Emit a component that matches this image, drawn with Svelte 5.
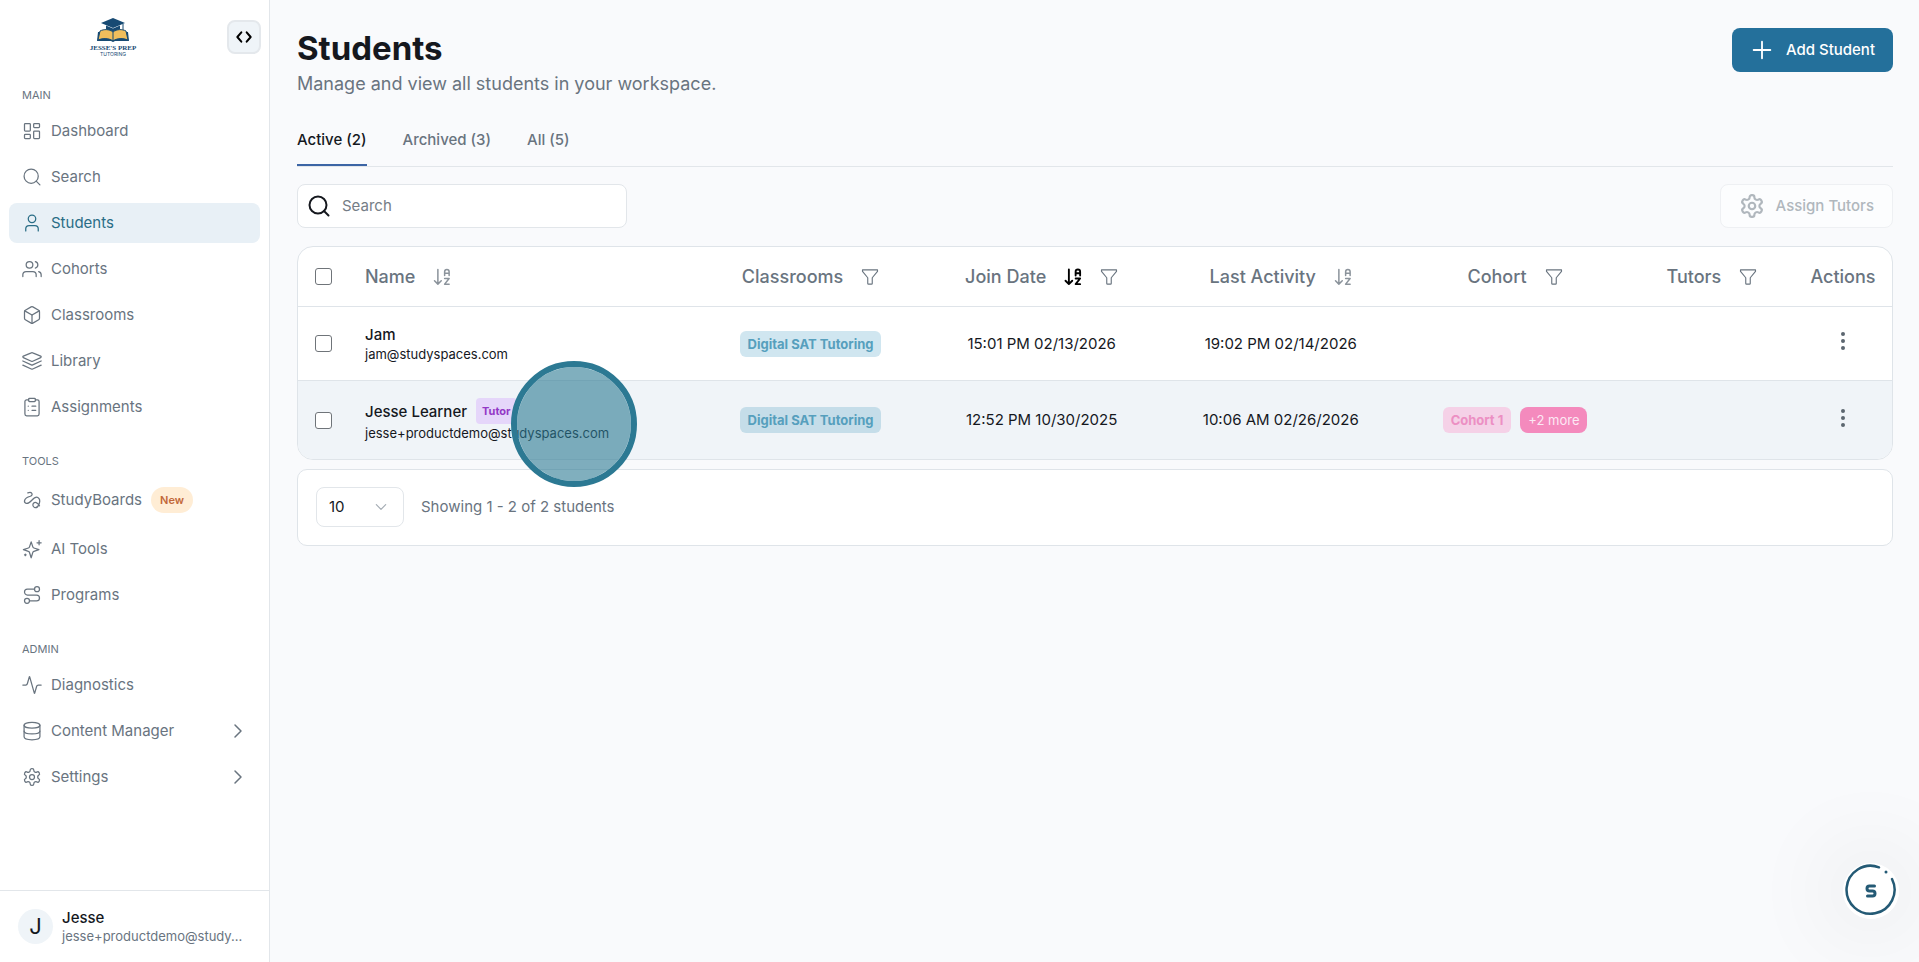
<script>
	const icons = {
		dashboard: '<rect x="3" y="3" width="7" height="9" rx="1"/><rect x="14" y="3" width="7" height="5" rx="1"/><rect x="14" y="12" width="7" height="9" rx="1"/><rect x="3" y="16" width="7" height="5" rx="1"/>',
		search: '<circle cx="11" cy="11" r="8.5"/><path d="m21.5 21.5-4.5-4.5"/>',
		user: '<path d="M19.5 21.5V19a4 4 0 0 0-4-4h-7a4 4 0 0 0-4 4v2.5"/><circle cx="12" cy="7" r="4.5"/>',
		users: '<path d="M17 21v-2a4 4 0 0 0-4-4H5a4 4 0 0 0-4 4v2"/><circle cx="9" cy="7" r="4"/><path d="M23 21v-2a4 4 0 0 0-3-3.87"/><path d="M16 3.13a4 4 0 0 1 0 7.75"/>',
		box: '<path d="M21 8a2 2 0 0 0-1-1.730l-7-4a2 2 0 0 0-2 0l-7 4A2 2 0 0 0 3 8v8a2 2 0 0 0 1 1.730l7 4a2 2 0 0 0 2 0l7-4A2 2 0 0 0 21 16Z"/><path d="m3.3 7 8.7 5 8.7-5"/><path d="M12 22V12"/>',
		layers: '<path d="M12.83 2.18a2 2 0 0 0-1.66 0L1.6 6.08a1 1 0 0 0 0 1.83l9.58 4.36a2 2 0 0 0 1.66 0l9.58-4.35a1 1 0 0 0 0-1.83Z"/><path d="m23 12-10.17 4.65a2 2 0 0 1-1.66 0L1 12"/><path d="m23 17-10.17 4.65a2 2 0 0 1-1.66 0L1 17"/>',
		clipboard: '<rect x="8" y="1.5" width="8" height="4" rx="1"/><path d="M16 3.5h2.5a2 2 0 0 1 2 2v15a2 2 0 0 1-2 2h-13a2 2 0 0 1-2-2v-15a2 2 0 0 1 2-2H8"/><path d="M12 11h4.500M12 16h4.500M7.500 11h.01M7.500 16h.01"/>',
		squiggle: '<path d="M7 3.5c5-2 7 2.5 3 4C1.5 10 2 15 5 16c5 2 9-10 14-7s.5 13.5-4 12c-5-2.5.5-11 6-2"/>',
		sparkles: '<path d="M11 3.5 13 9.500a2 2 0 0 0 1.3 1.3l6 2-6 2a2 2 0 0 0-1.3 1.3L11 22.500 9 16.200a2 2 0 0 0-1.3-1.3l-6-2.1 6-2A2 2 0 0 0 9 9.500Z"/><path d="M20.500 2v5M18 4.500h5M4 18v2M3 19h2"/>',
		route: '<circle cx="6" cy="19" r="3"/><path d="M9 19h8.5a3.5 3.5 0 0 0 0-7h-11a3.5 3.5 0 0 1 0-7H15"/><circle cx="18" cy="5" r="3"/>',
		activity: '<path d="M23 12h-3.500a2 2 0 0 0-1.9 1.46l-2.35 8.36a.25.25 0 0 1-.48 0L9.24 2.18a.25.25 0 0 0-.48 0l-2.35 8.36A2 2 0 0 1 4.49 12H1"/>',
		database: '<ellipse cx="12" cy="5" rx="9.5" ry="3.5"/><path d="M2.5 5v14c0 2 4.2 3.5 9.5 3.5s9.5-1.5 9.5-3.5V5"/><path d="M2.5 12c0 2 4.2 3.5 9.5 3.5s9.5-1.5 9.5-3.5"/>',
		gear: '<path d="M12.22 2h-.44a2 2 0 0 0-2 2v.18a2 2 0 0 1-1 1.73l-.43.25a2 2 0 0 1-2 0l-.15-.08a2 2 0 0 0-2.73.73l-.22.38a2 2 0 0 0 .73 2.73l.15.1a2 2 0 0 1 1 1.72v.51a2 2 0 0 1-1 1.74l-.15.09a2 2 0 0 0-.73 2.73l.22.38a2 2 0 0 0 2.73.73l.15-.08a2 2 0 0 1 2 0l.43.25a2 2 0 0 1 1 1.73V20a2 2 0 0 0 2 2h.44a2 2 0 0 0 2-2v-.18a2 2 0 0 1 1-1.73l.43-.25a2 2 0 0 1 2 0l.15.08a2 2 0 0 0 2.73-.73l.22-.39a2 2 0 0 0-.73-2.73l-.15-.08a2 2 0 0 1-1-1.74v-.5a2 2 0 0 1 1-1.74l.15-.09a2 2 0 0 0 .73-2.73l-.22-.38a2 2 0 0 0-2.73-.73l-.15.08a2 2 0 0 1-2 0l-.43-.25a2 2 0 0 1-1-1.73V4a2 2 0 0 0-2-2z"/><circle cx="12" cy="12" r="3"/>',
		sort: '<path d="m2 17 4.5 4.5L11 17M6.500 21V2"/><path d="M15.500 10V5a3 3 0 0 1 6 0v5M15.500 7h6M15.500 14h6l-6 7.500h6"/>',
		funnel: '<path d="M2 2.500h20v2l-7 8.500v7.500a1 1 0 0 1-1 1h-4a1 1 0 0 1-1-1V13L2 4.500z"/>',
		chevron: '<path d="m8 4 8 8-8 8"/>',
		down: '<path d="m4 8 8 8 8-8"/>',
		plus: '<path d="M12 2v20M2 12h20"/>',
		code: '<path d="m8 5-6 7 6 7M16 5l6 7-6 7"/>'
	};

	const sections = [
		{
			label: 'Main',
			items: [
				{ name: 'Dashboard', icon: 'dashboard' },
				{ name: 'Search', icon: 'search' },
				{ name: 'Students', icon: 'user', active: true },
				{ name: 'Cohorts', icon: 'users' },
				{ name: 'Classrooms', icon: 'box' },
				{ name: 'Library', icon: 'layers' },
				{ name: 'Assignments', icon: 'clipboard' }
			]
		},
		{
			label: 'Tools',
			items: [
				{ name: 'StudyBoards', icon: 'squiggle', badge: 'New' },
				{ name: 'AI Tools', icon: 'sparkles' },
				{ name: 'Programs', icon: 'route' }
			]
		},
		{
			label: 'Admin',
			items: [
				{ name: 'Diagnostics', icon: 'activity' },
				{ name: 'Content Manager', icon: 'database', expand: true },
				{ name: 'Settings', icon: 'gear', expand: true }
			]
		}
	];

	const columns = [
		{ name: 'Name', key: 'name', sort: true },
		{ name: 'Classrooms', key: 'classrooms', filter: true },
		{ name: 'Join Date', key: 'joined', sort: true, sorted: true, filter: true },
		{ name: 'Last Activity', key: 'activity', sort: true },
		{ name: 'Cohort', key: 'cohort', filter: true },
		{ name: 'Tutors', key: 'tutors', filter: true },
		{ name: 'Actions', key: 'actions' }
	];

	const students = [
		{
			name: 'Jam',
			email: 'jam@studyspaces.com',
			classroom: 'Digital SAT Tutoring',
			joined: '15:01 PM 02/13/2026',
			activity: '19:02 PM 02/14/2026'
		},
		{
			name: 'Jesse Learner',
			email: 'jesse+productdemo@studyspaces.com',
			tag: 'Tutor',
			classroom: 'Digital SAT Tutoring',
			joined: '12:52 PM 10/30/2025',
			activity: '10:06 AM 02/26/2026',
			cohort: 'Cohort 1',
			more: 2,
			hover: true
		}
	];

	const tabs = ['Active (2)', 'Archived (3)', 'All (5)'];
	let tab = $state('Active (2)');
	let query = $state('');
	let pageSize = $state('10');
</script>

{#snippet icon(name)}
	<svg class="icon" viewBox="0 0 24 24" aria-hidden="true">{@html icons[name]}</svg>
{/snippet}

<div class="app">
	<aside>
		<div class="brand">
			<svg class="logo" viewBox="0 0 48 40" role="img" aria-label="Jesse's Prep Tutoring">
				<path d="M24 1 12 6l12 5 12-5z" fill="#174a73" />
				<path d="M17 8.500v4c4 3 10 3 14 0v-4l-7 3z" fill="#174a73" />
				<path d="M34 7v8" stroke="#174a73" />
				<path d="M10 15h-1l-1 9h14l2 1 2-1h14l-1-9h-1" fill="#174a73" />
				<path d="M24 15c-4-3-9-3-13-1L9 23c5-2 11-2 15 1 4-3 10-3 15-1l-2-9c-4-2-9-2-13 1z" fill="#f1be5c" stroke="#174a73" />
				<path d="M24 15v9" stroke="#174a73" />
				<text class="logo-name" x="24" y="33">JESSE'S PREP</text>
				<text class="logo-sub" x="24" y="39">TUTORING</text>
			</svg>
			<button class="collapse" aria-label="Toggle sidebar">{@render icon('code')}</button>
		</div>
		<nav>
			{#each sections as section}
				<h2>{section.label}</h2>
				<ul>
					{#each section.items as item}
						<li>
							<a href="#{item.icon}" class:active={item.active}>
								{@render icon(item.icon)}
								{item.name}
								{#if item.badge}<span class="new">{item.badge}</span>{/if}
								{#if item.expand}<span class="expand">{@render icon('chevron')}</span>{/if}
							</a>
						</li>
					{/each}
				</ul>
			{/each}
		</nav>
		<div class="account">
			<span class="avatar">J</span>
			<div class="who">
				<strong>Jesse</strong>
				<span>jesse+productdemo@study...</span>
			</div>
		</div>
	</aside>

	<main>
		<header>
			<div>
				<h1>Students</h1>
				<p>Manage and view all students in your workspace.</p>
			</div>
			<button class="primary">{@render icon('plus')} Add Student</button>
		</header>

		<div class="tabs">
			{#each tabs as t}
				<button class:current={tab === t} onclick={() => (tab = t)}>{t}</button>
			{/each}
		</div>

		<div class="toolbar">
			<label class="search">
				{@render icon('search')}
				<input type="text" placeholder="Search" aria-label="Search" bind:value={query} />
			</label>
			<button class="assign" disabled>{@render icon('gear')} Assign Tutors</button>
		</div>

		<div class="table-wrap">
			<table>
				<colgroup>
					<col class="c-check" />
					{#each columns as column}
						<col class="c-{column.key}" />
					{/each}
				</colgroup>
				<thead>
					<tr>
						<th class="check"><input type="checkbox" aria-label="Select all" /></th>
						{#each columns as column}
							<th class:name={column.key === 'name'}>
								<div class="head">
									{column.name}
									{#if column.sort}
										<button class="sort" class:sorted={column.sorted} aria-label="Sort by {column.name}">{@render icon('sort')}</button>
									{/if}
									{#if column.filter}
										<button aria-label="Filter {column.name}">{@render icon('funnel')}</button>
									{/if}
								</div>
							</th>
						{/each}
					</tr>
				</thead>
				<tbody>
					{#each students as student}
						<tr class:hover={student.hover}>
							<td class="check"><input type="checkbox" aria-label="Select {student.name}" /></td>
							<td class="name">
								<div class="student">
									<strong>{student.name}</strong>
									{#if student.tag}<span class="tag purple">{student.tag}</span>{/if}
								</div>
								<div class="email">{student.email}</div>
								{#if student.hover}<span class="pointer"></span>{/if}
							</td>
							<td><span class="tag blue">{student.classroom}</span></td>
							<td>{student.joined}</td>
							<td>{student.activity}</td>
							<td>
								{#if student.cohort}
									<div class="cohorts">
										<span class="tag pink">{student.cohort}</span>
										<span class="tag more">+{student.more} more</span>
									</div>
								{/if}
							</td>
							<td></td>
							<td>
								<button class="menu" aria-label="Actions for {student.name}">
									<svg viewBox="0 0 4 18"><circle cx="2" cy="2" r="2" /><circle cx="2" cy="9" r="2" /><circle cx="2" cy="16" r="2" /></svg>
								</button>
							</td>
						</tr>
					{/each}
				</tbody>
			</table>
		</div>

		<div class="pager">
			<div class="size">
				<select aria-label="Rows per page" bind:value={pageSize}>
					<option>10</option>
					<option>20</option>
					<option>50</option>
				</select>
				{@render icon('down')}
			</div>
			<span>Showing 1 - 2 of 2 students</span>
		</div>
	</main>

	<button class="assistant" aria-label="Open assistant">
		<svg viewBox="0 0 56 56">
			<circle class="disc" cx="28" cy="28" r="28" />
			<path class="ring" d="M36 4.300A24 24 0 1 0 49 16" />
			<circle class="dot" cx="43" cy="9" r="1.500" />
			<path class="mark" d="M31.500 23h-5q-2.500 0-2.500 2.500t2.500 2.500h3q2.500 0 2.500 2.500T29.500 33H24.500" />
		</svg>
	</button>
</div>

<style>
	:global(body) {
		background: #f9fafc;
	}
	.app {
		display: flex;
		min-height: 100vh;
		font-family: Inter, "Liberation Sans", sans-serif;
		font-size: 15px;
		line-height: 20px;
		color: #15181e;
	}
	button, input, select {
		font: inherit;
		color: inherit;
		margin: 0;
	}
	button {
		background: none;
		border: none;
		padding: 0;
		cursor: pointer;
	}
	.icon {
		display: block;
		flex: none;
		width: 20px;
		height: 20px;
		fill: none;
		stroke: currentColor;
		stroke-width: 1.5;
		stroke-linecap: round;
		stroke-linejoin: round;
	}

	aside {
		position: sticky;
		top: 0;
		display: flex;
		flex-direction: column;
		flex: none;
		box-sizing: border-box;
		width: 270px;
		height: 100vh;
		background: #fff;
		border-right: 1px solid #e2e6ea;
	}
	.brand {
		display: flex;
		align-items: center;
		justify-content: flex-end;
		gap: 90px;
		padding: 16px 8px 0 0;
	}
	.logo {
		width: 48px;
		height: 42px;
	}
	.logo-name, .logo-sub {
		font-family: "Liberation Serif", serif;
		font-size: 7px;
		font-weight: 700;
		text-anchor: middle;
		fill: #174a73;
	}
	.logo-sub {
		font-family: Inter, sans-serif;
		font-size: 5px;
		font-weight: 400;
	}
	.collapse {
		display: grid;
		place-items: center;
		box-sizing: border-box;
		width: 34px;
		height: 34px;
		background: #eff4f8;
		border: 2px solid #e4e8ec;
		border-radius: 8px;
		color: #000;
	}
	.collapse .icon {
		width: 16px;
		height: 16px;
		stroke-width: 3;
	}
	nav {
		flex: 1;
		padding: 3px 9px 0;
		color: #69747f;
	}
	h2 {
		margin: 24px 0 6px 13px;
		font-size: 11px;
		font-weight: 400;
		line-height: 20px;
		text-transform: uppercase;
	}
	ul {
		display: flex;
		flex-direction: column;
		gap: 6px;
		margin: 0;
		padding: 0;
		list-style: none;
	}
	nav a {
		display: flex;
		align-items: center;
		gap: 9px;
		padding: 10px 13px;
		border-radius: 8px;
		color: inherit;
		text-decoration: none;
	}
	nav a.active {
		background: #e8f0f6;
		color: #2a6d86;
	}
	.new {
		padding: 3px 9px;
		border-radius: 13px;
		background: #ffedd5;
		color: #c2683a;
		font-size: 11px;
		font-weight: 600;
	}
	.expand {
		margin-left: auto;
	}
	.expand .icon {
		width: 18px;
		height: 18px;
		stroke-width: 2;
	}
	.account {
		display: flex;
		align-items: center;
		gap: 9px;
		padding: 17px 18px;
		border-top: 1px solid #e2e6ea;
	}
	.avatar {
		flex: none;
		width: 35px;
		line-height: 35px;
		border-radius: 50%;
		background: #eff4f8;
		font-size: 22px;
		text-align: center;
	}
	.who {
		min-width: 0;
		line-height: 19px;
	}
	.who strong {
		display: block;
		font-weight: 500;
	}
	.who span {
		display: block;
		font-size: 13px;
		line-height: 18px;
		white-space: nowrap;
		color: #69747f;
	}

	main {
		flex: 1;
		min-width: 0;
		padding: 28px 26px 28px 27px;
	}
	header {
		display: flex;
		align-items: flex-start;
		justify-content: space-between;
	}
	h1 {
		margin: 0;
		font-size: 33px;
		font-weight: 700;
		line-height: 40px;
	}
	p {
		margin: 4px 0 0;
		font-size: 18px;
		line-height: 24px;
		color: #69747f;
	}
	.primary, .assign {
		display: flex;
		align-items: center;
		gap: 14px;
		box-sizing: border-box;
		height: 44px;
		padding: 0 18px 0 20px;
		border-radius: 8px;
		background: #24709b;
		color: #fff;
		font-weight: 500;
	}
	.primary .icon {
		stroke-width: 2.2;
	}
	.assign {
		gap: 11px;
		padding: 0 18px;
		border: 1px solid #eef0f3;
		background: #fcfdfe;
		color: #b0b7bd;
	}
	.assign .icon {
		width: 26px;
		height: 26px;
		stroke-width: 2;
	}
	.tabs {
		display: flex;
		gap: 36px;
		margin-top: 18px;
		border-bottom: 1px solid #e2e6ea;
	}
	.tabs button {
		padding: 16px 0 14px;
		border-bottom: 2px solid transparent;
		font-weight: 500;
		color: #69747f;
	}
	.tabs .current {
		border-color: #3c65a5;
		color: #15181e;
	}
	.toolbar {
		display: flex;
		justify-content: space-between;
		margin: 17px 0 18px;
	}
	.search {
		display: flex;
		align-items: center;
		gap: 11px;
		box-sizing: border-box;
		width: 330px;
		height: 44px;
		padding: 0 9px;
		background: #fff;
		border: 1px solid #e2e6ea;
		border-radius: 8px;
	}
	.search .icon {
		width: 24px;
		height: 24px;
		stroke-width: 2;
	}
	.search input {
		flex: 1;
		min-width: 0;
		border: none;
		outline: none;
		padding: 0;
		background: none;
	}
	.search input::placeholder {
		color: #757d86;
	}

	.table-wrap, .pager {
		background: #fff;
		border: 1px solid #dfe4e9;
	}
	.table-wrap {
		border-radius: 16px;
	}
	table {
		width: 100%;
		border-collapse: separate;
		border-spacing: 0;
		table-layout: fixed;
	}
	.c-check {
		width: 51px;
	}
	.c-classrooms {
		width: 14%;
	}
	.c-joined, .c-activity {
		width: 15%;
	}
	.c-cohort {
		width: 14.4%;
	}
	.c-tutors {
		width: 10.3%;
	}
	.c-actions {
		width: 98px;
	}
	th, td {
		padding: 0;
		text-align: center;
	}
	th {
		height: 59px;
		font-size: 18px;
		font-weight: 500;
		color: #69747f;
	}
	td {
		padding: 17px 0;
		border-top: 1px solid #dfe4e9;
	}
	.hover td {
		background: #f0f4f8;
	}
	tr:last-child td:first-child {
		border-bottom-left-radius: 15px;
	}
	tr:last-child td:last-child {
		border-bottom-right-radius: 15px;
	}
	.check {
		padding-left: 17px;
		text-align: left;
	}
	.check input {
		appearance: none;
		display: block;
		box-sizing: border-box;
		width: 17px;
		height: 17px;
		border: 1px solid #6f7479;
		border-radius: 3px;
		background: #fff;
	}
	.name {
		position: relative;
		padding-left: 16px;
		text-align: left;
	}
	.head {
		display: flex;
		align-items: center;
		justify-content: center;
		gap: 18px;
		white-space: nowrap;
	}
	.name .head {
		justify-content: flex-start;
	}
	.head .icon {
		width: 18px;
		height: 18px;
	}
	.head .sort {
		color: #8b939b;
	}
	.head .sort .icon {
		stroke-width: 2;
	}
	.head .sorted {
		color: #000;
	}
	.head .sorted .icon {
		stroke-width: 2.5;
	}
	.student {
		display: flex;
		align-items: center;
		gap: 9px;
	}
	.student strong {
		font-weight: 500;
		line-height: 21px;
	}
	.email {
		font-size: 13px;
		line-height: 18px;
	}
	.tag {
		display: inline-block;
		padding: 3px 8px;
		border-radius: 6px;
		font-size: 13px;
		font-weight: 700;
		white-space: nowrap;
	}
	.purple {
		padding: 3px 6px;
		border-radius: 4px;
		background: #e5d6fa;
		color: #9338c6;
		font-size: 11px;
	}
	.blue {
		background: #d0e6f0;
		color: #569fbd;
	}
	.hover .blue {
		background: #c5dde9;
	}
	.cohorts {
		display: flex;
		justify-content: center;
		gap: 9px;
	}
	.pink {
		background: #f5d1e7;
		color: #ec8fc3;
	}
	.more {
		border-radius: 8px;
		background: #f48abd;
		color: #fce9f4;
		font-weight: 400;
	}
	.menu {
		width: 24px;
		height: 24px;
		color: #5c6670;
	}
	.menu svg {
		display: block;
		width: 4px;
		height: 18px;
		margin: 0 auto;
		fill: currentColor;
	}
	/* click marker floating over the hovered row */
	.pointer {
		position: absolute;
		z-index: 1;
		top: -20px;
		left: 162px;
		box-sizing: border-box;
		width: 126px;
		height: 126px;
		border: 6px solid #2c7993;
		border-radius: 50%;
		background: rgba(44, 121, 147, 0.6);
		background-clip: padding-box;
		pointer-events: none;
	}
	.pager {
		display: flex;
		align-items: center;
		gap: 17px;
		margin-top: 9px;
		padding: 17px 18px 18px;
		border-radius: 10px;
		color: #69747f;
	}
	.size {
		display: grid;
		align-items: center;
	}
	.size select {
		grid-area: 1 / 1;
		appearance: none;
		width: 88px;
		height: 40px;
		padding: 0 12px;
		background: #fff;
		border: 1px solid #e2e6ea;
		border-radius: 8px;
		color: #15181e;
	}
	.size .icon {
		grid-area: 1 / 1;
		justify-self: end;
		width: 14px;
		height: 14px;
		margin-right: 16px;
		stroke-width: 2;
		color: #a3abb3;
		pointer-events: none;
	}

	.assistant {
		position: fixed;
		right: 20px;
		bottom: 43px;
		width: 56px;
		height: 56px;
		border-radius: 50%;
		box-shadow: 0 0 90px 20px rgba(30, 30, 40, 0.06);
	}
	.assistant svg {
		display: block;
	}
	.disc {
		fill: #fff;
	}
	.ring, .mark {
		fill: none;
		stroke: #245a75;
		stroke-width: 2.5;
		stroke-linecap: round;
	}
	.mark {
		stroke-width: 3;
		stroke-linejoin: round;
	}
	.dot {
		fill: #245a75;
	}
</style>
